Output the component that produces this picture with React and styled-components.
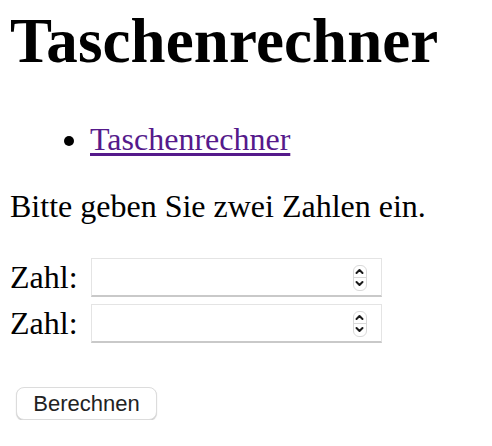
import React from 'react';
import styled, { createGlobalStyle } from 'styled-components';

const GlobalStyle = createGlobalStyle`
  body {
    margin: 0;
    background: #fff;
    color: #000;
    font-family: "Liberation Serif", "Times New Roman", serif;
  }
`;

const Page = styled.div`
  padding: 6px 0 0 10px;
  font-size: 32px;
  line-height: 36px;
`;

const Title = styled.h1`
  margin: 0;
  font-size: 63px;
  line-height: 70px;
  font-weight: bold;
  letter-spacing: 0.1px;
`;

const NavList = styled.ul`
  margin: 45px 0 0;
  padding-left: 80px;
  list-style: disc;
`;

const NavLink = styled.a`
  color: #551a8b;
  text-decoration: underline;
  text-underline-offset: 3px;
`;

const Intro = styled.p`
  margin: 31px 0 0;
`;

const Form = styled.form`
  margin-top: 34px;
  display: flex;
  flex-direction: column;
  gap: 7px;
`;

const Row = styled.div`
  display: flex;
  align-items: center;
  gap: 13px;
`;

const Label = styled.label`
  margin-top: -2px;
`;

const InputBox = styled.div`
  width: 291px;
  height: 39px;
  box-sizing: border-box;
  display: flex;
  align-items: center;
  padding-right: 14px;
  background: #fff;
  border: 1px solid #e4e4e4;
  border-bottom: 2px solid #c9c9c9;
`;

const NumberInput = styled.input`
  flex: 1;
  min-width: 0;
  height: 100%;
  border: none;
  outline: none;
  background: transparent;
  font-size: 20px;
  padding: 0 6px;
`;

const Spinner = styled.span`
  width: 14px;
  height: 26px;
  box-sizing: border-box;
  border: 1px solid #d9d9d9;
  border-radius: 6px;
  display: flex;
  flex-direction: column;
  margin-top: 1px;
  background: #fff;
`;

const SpinHalf = styled.span`
  flex: 1;
  display: flex;
  align-items: center;
  justify-content: center;
  border-top: ${(p) => (p.$lower ? '1px solid #d9d9d9' : 'none')};
`;

const Chevron = ({ down }) => (
  <svg width="9" height="7" viewBox="0 0 9 7">
    <path
      d={down ? 'M1.5 2 L4.5 5 L7.5 2' : 'M1.5 5 L4.5 2 L7.5 5'}
      fill="none"
      stroke="#1a1a1a"
      strokeWidth="2"
      strokeLinecap="round"
      strokeLinejoin="round"
    />
  </svg>
);

const SubmitButton = styled.button`
  margin: 44px 0 0 6px;
  width: 141px;
  height: 33px;
  box-sizing: border-box;
  background: #fff;
  color: #222;
  border: 1px solid #dcdcdc;
  border-radius: 8px;
  box-shadow: 0 1px 1px rgba(0, 0, 0, 0.2);
  font-family: "Liberation Sans", Arial, sans-serif;
  font-size: 22px;
  padding: 0;
  cursor: pointer;
`;

const NumberField = () => (
  <InputBox>
    <NumberInput type="text" />
    <Spinner>
      <SpinHalf>
        <Chevron />
      </SpinHalf>
      <SpinHalf $lower>
        <Chevron down />
      </SpinHalf>
    </Spinner>
  </InputBox>
);

const App = () => (
  <Page>
    <GlobalStyle />
    <Title>Taschenrechner</Title>
    <NavList>
      <li>
        <NavLink href="#">Taschenrechner</NavLink>
      </li>
    </NavList>
    <Intro>Bitte geben Sie zwei Zahlen ein.</Intro>
    <Form onSubmit={(e) => e.preventDefault()}>
      <Row>
        <Label>Zahl:</Label>
        <NumberField />
      </Row>
      <Row>
        <Label>Zahl:</Label>
        <NumberField />
      </Row>
    </Form>
    <SubmitButton type="button">Berechnen</SubmitButton>
  </Page>
);

export default App;
